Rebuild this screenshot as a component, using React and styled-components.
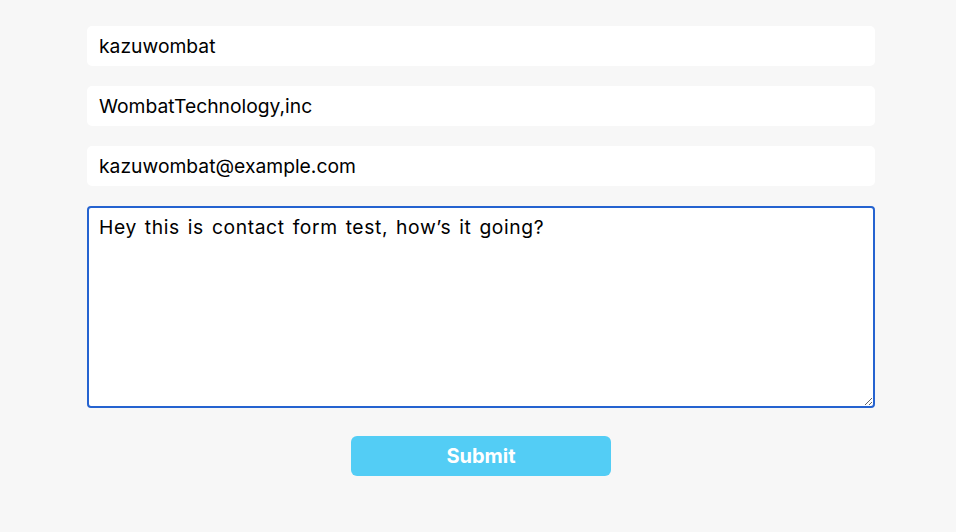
import React, { useState } from 'react';
import styled, { createGlobalStyle } from 'styled-components';

const GlobalStyle = createGlobalStyle`
  html, body {
    margin: 0;
    padding: 0;
    background: #f7f7f7;
  }
  body {
    font-family: Inter, "Liberation Sans", sans-serif;
  }
`;

const Form = styled.form`
  width: 788px;
  margin: 26px 0 0 87px;
  display: flex;
  flex-direction: column;
  gap: 20px;
`;

const Field = styled.input`
  box-sizing: border-box;
  width: 100%;
  height: 40px;
  padding: 0 12px;
  border: none;
  border-radius: 5px;
  background: #fff;
  color: #000;
  font-family: inherit;
  font-size: 19.3px;
  word-spacing: 3px;
  outline: none;
`;

const Message = styled.textarea`
  box-sizing: border-box;
  width: 100%;
  height: 202px;
  padding: 7px 10px;
  border: 2px solid #2563d0;
  border-radius: 4px;
  background: #fff;
  color: #000;
  font-family: inherit;
  font-size: 19.3px;
  letter-spacing: 0.6px;
  word-spacing: 2px;
  line-height: 1.3;
  outline: none;
  resize: vertical;
`;

const Submit = styled.button`
  align-self: center;
  width: 260px;
  height: 40px;
  margin-top: 8px;
  border: none;
  border-radius: 6px;
  background: #53cdf5;
  color: #fff;
  font-family: inherit;
  font-size: 20px;
  font-weight: 700;
  cursor: pointer;
`;

const App = () => {
  const [values, setValues] = useState({
    name: 'kazuwombat',
    company: 'WombatTechnology,inc',
    email: 'kazuwombat@example.com',
    message: 'Hey this is contact form test, how’s it going?',
  });

  const update = key => e => setValues({ ...values, [key]: e.target.value });

  return (
    <>
      <GlobalStyle />
      <Form onSubmit={e => e.preventDefault()}>
        <Field value={values.name} onChange={update('name')} />
        <Field value={values.company} onChange={update('company')} />
        <Field type="email" value={values.email} onChange={update('email')} />
        <Message value={values.message} onChange={update('message')} />
        <Submit type="submit">Submit</Submit>
      </Form>
    </>
  );
};

export default App;
